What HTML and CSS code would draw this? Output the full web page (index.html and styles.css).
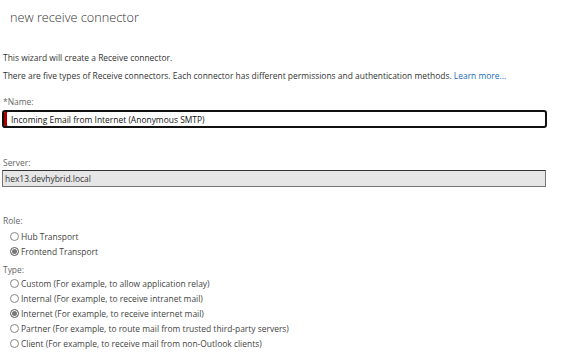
FILE: index.html
```html
<!DOCTYPE html>
<html lang="en">
<head>
    <meta charset="UTF-8">
    <title>new receive connector</title>
    <link rel="stylesheet" href="styles.css">
</head>
<body>
    <div class="dialog">
        <h1>new receive connector</h1>

        <div class="intro">
            <p>This wizard will create a Receive connector.</p>
            <p>There are five types of Receive connectors. Each connector has different permissions and authentication methods. <a href="#">Learn more...</a></p>
        </div>

        <div class="field field-name">
            <label for="name">*Name:</label>
            <div class="text-box required">
                <input type="text" id="name" value="Incoming Email from Internet (Anonymous SMTP)">
            </div>
        </div>

        <div class="field field-server">
            <label for="server">Server:</label>
            <div class="text-box readonly">
                <input type="text" id="server" value="hex13.devhybrid.local" readonly>
            </div>
        </div>

        <div class="field field-role">
            <div class="group-label">Role:</div>
            <label class="option"><input type="radio" name="role"> Hub Transport</label>
            <label class="option"><input type="radio" name="role" checked> Frontend Transport</label>
        </div>

        <div class="field field-type">
            <div class="group-label">Type:</div>
            <label class="option"><input type="radio" name="type"> Custom (For example, to allow application relay)</label>
            <label class="option"><input type="radio" name="type"> Internal (For example, to receive intranet mail)</label>
            <label class="option"><input type="radio" name="type" checked> Internet (For example, to receive internet mail)</label>
            <label class="option"><input type="radio" name="type"> Partner (For example, to route mail from trusted third-party servers)</label>
            <label class="option"><input type="radio" name="type"> Client (For example, to receive mail from non-Outlook clients)</label>
        </div>
    </div>
</body>
</html>
```

FILE: styles.css
```css
body {
    margin: 0;
    padding: 0;
    background-color: #fff;
    font-family: 'Open Sans', 'Noto Sans', sans-serif;
    font-size: 8.45px;
    color: #333;
}

.dialog {
    width: 572px;
    height: 360px;
    overflow: hidden;
    padding-left: 3px;
    box-sizing: border-box;
}

h1 {
    margin: 0 0 0 7px;
    padding: 8px 0;
    font-size: 12.7px;
    font-weight: 300;
    line-height: 18px;
    color: #333;
}

.intro {
    margin-top: 15px;
}

.intro p {
    margin: 0;
    line-height: 18px;
}

.intro a {
    color: #1a6bb8;
    text-decoration: none;
}

.field label,
.group-label {
    display: block;
    line-height: 12px;
    color: #666;
}

.field-name {
    margin-top: 11px;
}

.field-server {
    margin-top: 29px;
}

.field-role {
    margin-top: 28px;
}

.field-role .group-label {
    margin-bottom: 2px;
}

.field-type {
    margin-top: 5px;
}

.text-box {
    width: 545px;
    height: 17px;
    box-sizing: border-box;
    margin-left: -1px;
}

.text-box input {
    width: 100%;
    height: 100%;
    box-sizing: border-box;
    border: none;
    outline: none;
    background: transparent;
    font: inherit;
    color: #222;
    padding: 0;
}

.field-name .text-box {
    margin-top: 2px;
    border: 2px solid #111;
    border-radius: 3px;
    padding-left: 3px;
    box-shadow: inset 3px 0 0 #a80000;
    height: 18px;
}

.field-name .text-box input {
    padding-left: 4px;
    color: #111;
}

.field-server .text-box {
    margin-top: 1px;
    background-color: #e6e6e6;
    border: 1px solid #777;
    border-top-color: #333;
    width: 544px;
}

.field-server .text-box input {
    padding-left: 2px;
    color: #333;
}

.field .option {
    display: flex;
    align-items: center;
    line-height: 15px;
    padding-left: 7px;
    color: #444;
}

.option input {
    -webkit-appearance: none;
    appearance: none;
    width: 9px;
    height: 9px;
    margin: 0 2px 0 0;
    border: 1px solid #888;
    border-radius: 50%;
    background: #fff;
    box-sizing: border-box;
    position: relative;
}

.option input:checked {
    border-color: #555;
}

.option input:checked::after {
    content: "";
    position: absolute;
    left: 1px;
    top: 1px;
    width: 5px;
    height: 5px;
    border-radius: 50%;
    background: #777;
}
```
